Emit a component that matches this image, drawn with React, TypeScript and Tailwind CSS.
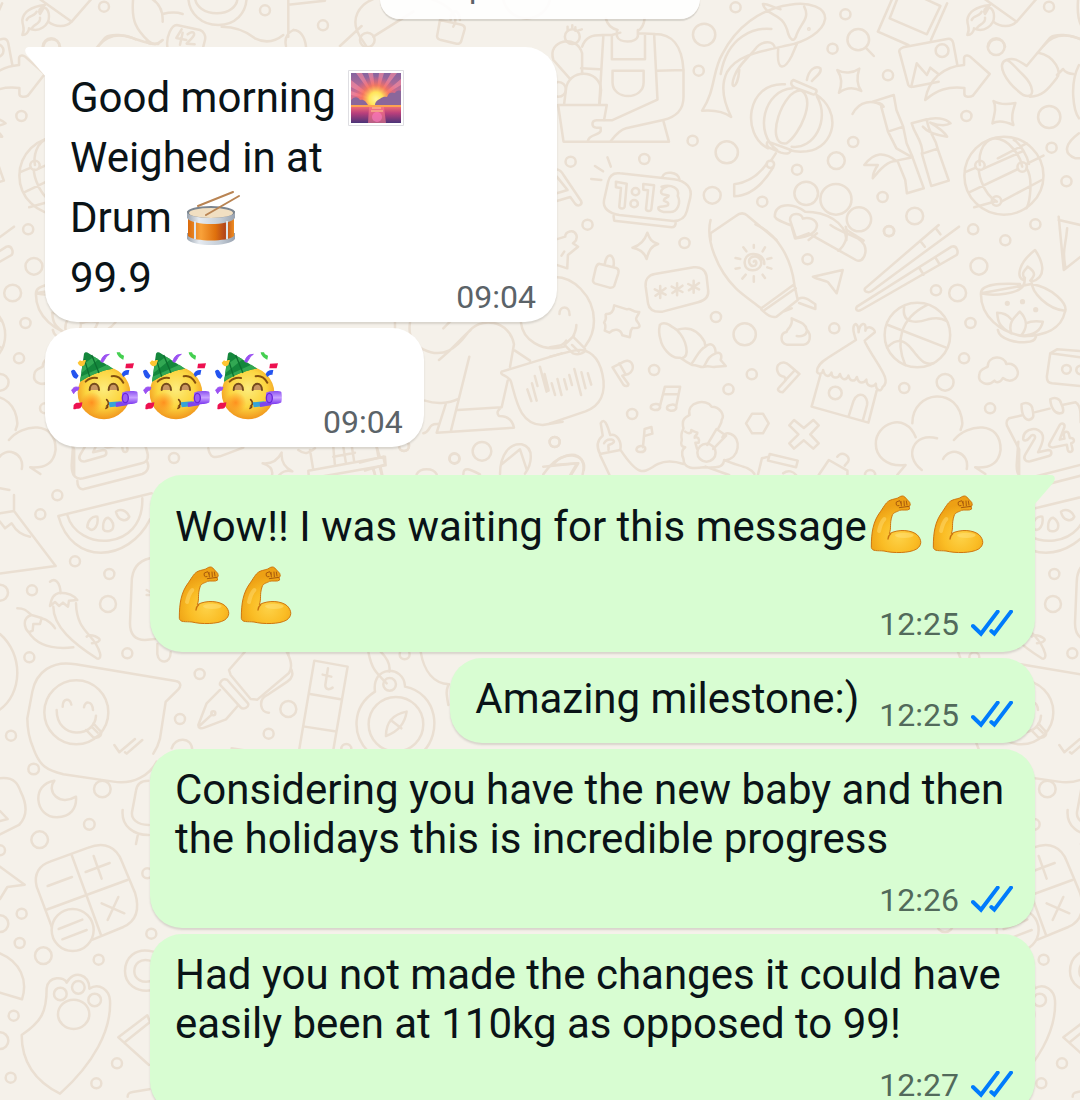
import React from 'react';

type Dot = [number, number, number];

const Dots = ({ items }: { items: Dot[] }) => (
  <>
    {items.map(([cx, cy, r]) => (
      <circle key={`${cx}-${cy}`} cx={cx} cy={cy} r={r} />
    ))}
  </>
);

// One horizontal tile of the wallpaper, it repeats every 945 units
const DoodleTile = () => (
  <g id="doodles">
    {/* top left strip */}
    <g transform="scale(.3333)">
      <path d="M135 15c-40 5-65 20-68 45 0 20 10 25 0 45 10 0 20-8 20-20 30 15 60-10 60-35 0-15-5-25-15-28l-12 20c-5-8-3-18 15-27M80 60c5-15 25-10 30-25M95 88c0-15 30-15 25-35" />
      <path d="M95-20l120 85M280-10l-65 75c-20 20-50 15-70 0" />
      <path d="M400-10c-5 50 0 80 20 105 15 20 30 35 45 38M445-10c30 15 45 40 43 75M488 42c20-5 45-5 60 0M488 120c-15 15-35 15-50 5" />
      <path d="M565-10c0 50 40 85 90 85s85-35 85-85M585-10c0 30 30 50 65 50s65-20 62-50" />
      <path d="M530 75l70 15c12 4 18 18 15 30l-5 20M530 75c-15 0-32 35-28 65M295 138c20-25 45-35 80-30 40 8 60 25 100 24M665 80c40 0 70 10 100 35 30 15 60 10 85-10" />
      <path d="M545 88l-16 26 30 6M548 98l-8 36M563 103c20-15 25 0 12 12l-15 16 24 2" />
      <path d="M865-5v115M865 14l110-12M880 90c20 0 35 20 38 50M880 90c-20 10-27 25-22 48M1140-10c-70 20-90 70-60 120l20 30M1120 110l120-75M1020 138l65-60M1270-10c80 20 110 60 90 90M130 140c5-30 45-30 50 0" />
      <circle cx="1102" cy="120" r="22" />
      <path d="M1320 60l65 14c8 2 10 8 9 14l-10 35c-2 6-8 10-14 8l-50-12c-7-2-10-8-8-14zM1352 60c0-35 25-35 28 0M1510 0a72 72 0 0 0 140 0" />
      <Dots items={[[312, 20, 15], [795, 31, 15], [969, 76, 15]]} />
    </g>

    {/* florist, fish, lantern, bamboo, globe */}
    <g transform="translate(550 0) scale(.338 .3333)">
      <path d="M165 55c5 20 15 30 35 35M280 55c-2 20-8 30-20 38M198 90v18c5 22 58 22 62 0V90M183 105v73h98v-75M183 105l25-7M260 100l50 2M95 140c10-30 30-35 60-35h30M158 105l-12 205M308 102l10 197-135 62h-45c-18 2-15 22 0 22h12v10c-5 14-35 10-38 30M310 102c50 0 80 30 85 108l-77 2M395 210v80c0 40-20 60-60 70l-110 25c-20 5-35 25-45 38M92 205l54 3M185 212h92v35c0 55-92 55-92 0z" />
      <path d="M24 315h144l-8 45M24 315l16 110h312l-16-60M42 310l5-40c5-65 100-65 104 0l-4 40M58 235L10 180c-20-60 70-80 85-20v60" />
      <circle cx="66" cy="110" r="22" />
      <path d="M52 88v-8M66 84V76M82 92l12-4M75 92V82" />
      <path d="M450 332c40-60 30-120 60-170 40-80 110-135 200-148 60-10 105 10 104 42-5 40-60 70-110 80-90 20-150 30-180 80-20 40-10 90 12 135-20-15-50-22-86-19M630 12c10 40 60 20 75 90 5 15 15 25 22 10 10-40 45-55 25-92M630 12c15-2 25 10 52 16M655 87c-50-5-130 20-150 135M665 145c0-25-40-25-60 5-30 35-50 50-60 80-15 40 10 40 15-20M675 148c-5 70 20 60 40 20l15-35" />
      <circle cx="766" cy="87" r="2" />
      <circle cx="912" cy="119" r="32" />
      <path d="M934 143l24 25" />
      <path d="M850 210c20 12 45 10 65-4-8 25-8 48 6 67-22-12-45-10-66 5 10-25 8-48-5-68zM1312 303c20 12 45 10 65 6-8 25-14 45-6 66-22-10-45-15-62-5 5-25 13-48 3-67z" />
      <path d="M645 445c-80-40-65-200 50-192M785 282c80 50 60 160-25 172-20 2-40 0-50-3M672 450c-70-50-40-180 45-185M790 290c40 70-10 160-75 150M700 430c-70 10-10-170 45-158 40 30-5 130-45 158zM720 240l65 28c8 5 0 20-10 14l-52-20c-12-6-12-18-3-22zM645 425l68 25c-4 14-15 12-30 8l-35-15c-8-5-8-15-3-18M760 240c5-30 25-45 40-35 5 15-15 25-25 38M668 460l-14 22M660 503c-30 50-70 85-115 86v-36c40-5 70-25 95-60" />
      <circle cx="652" cy="493" r="11" />
      <path d="M970 95L1015-10M970 95l90 40M1175 10l-48 110M1030-10l-25 65 110 48L1155 18l-75-35M1035 160c-5-10 2-15 10-18l130-25c10-2 16 5 18 12l12 65M1035 160l25 95c3 6 8 7 15 5l75-15M1070 255l15-65 30 35 10-22 25 20" />
      <circle cx="1160" cy="152" r="19" />
      <path d="M1110 300c10-60 50-100 115-105v-20c0-8 10-12 18-5l58 52-50 65c-8 5-25 5-25-5v-18c-50-5-80 5-116 36z" />
      <path d="M1350 180c-30 10-5 65 50 105 40 15 30-30 0-60s-40-45-50-45zM1350 180c25-10 40 5 60 18l70-85c15-12 60-10 90 5M1445 158c50 10 70 60 55 75-30 40-45 55-80 57M1500 225l18-18c5 10 20 15 30 15M1565 195c-30 60-15 140 0 160M1565 400c-40 30-50 60-10 75h15" />
      <path d="M895 342c20-40 60-45 92-22-5-10-20-15-32-15M955 305l62-20 8 45 20 50-45 15-20-75M1000 395l25 50 48 28 33 92-50 15-5-40-22-55M1025 482l48-10M1045 380l10 50 18 42M930 495c30-40 60-40 95-12-25 0-45 20-70 52 0-15 5-25 15-40zM1070 370l45-12c5 45 25 50 32 88l-45 15c0-40-20-50-32-91zM1100 460l28 98 52-16-33-95M1110 360c30-10 60-5 75 10-15 10-40 5-60-2 20 12 40 25 50 42-40-5-60-15-72-30" />
      <circle cx="1343" cy="527" r="117" />
      <path d="M1313 415c-40 10-45 60-41 80M1284 505l112-50M1232 515l28-12M1313 415c50 0 80 60 84 85M1272 510c-10-10 5 70 50 95M1240 577l145-70M1410 492l50-25M1335 605l120-65M1255 622l65-18M1410 430l-85 45M1410 505c20 30 10 100 0 120M1372 420c20 10 40 50 45 72" />
      <circle cx="1272" cy="496" r="14" /><circle cx="1397" cy="501" r="14" /><circle cx="1321" cy="603" r="14" />
      <path d="M160 600l12-55c4-18 15-28 35-25l160 18c35 5 55 25 48 55l-10 40c-5 20-20 30-40 30l-160-18c-30-5-50-20-45-45zM188 648l2 14 170 20c10 0 12-8 12-16M333 530c5-18 45-15 50 8M170 472l10 28M133 498l24 16M122 537l30 3" />
      <path d="M195 545l32 6-6 68c0 10-16 8-16 0l5-55-15-2zM276 552l32 4-8 70c0 10-16 8-16 0l6-55-14-2zM330 560c30-8 55 5 48 28 10 20 0 50-25 48-20 2-35-5-32-14 8-5 20 0 28-6 5-10-8-10-12-14 0-10 14-8 14-15-8-5-18 0-22-8-2-8 5-15 17-19z" />
      <circle cx="253" cy="575" r="11" /><circle cx="249" cy="611" r="11" />
      <path d="M-10 520c20-20 40-15 50 5l52 78c5 12-10 18-18 8l-14-20-60 18M20 530l32 40-32 10" />
      <circle cx="758" cy="580" r="35" /><circle cx="846" cy="598" r="46" /><circle cx="914" cy="658" r="36" />
      <path d="M665 650c0-40 50-45 90-15 60 0 120 30 122 85M665 650c5 10 20 15 45 25M728 715l-18-55c0-25 35-22 38-4 15-5 40 0 42 20-2 25-30 35-62 39zM790 700l-25 20M878 690l50 32" />
      <path d="M475 720v-20l75-52c12-10 25-10 35 0l85 72" />
      <Dots items={[[549, 22, 15], [874, 43, 15], [836, 146, 15], [456, 104, 33], [440, 212, 15], [1000, 226, 15], [422, 422, 15], [897, 426, 15], [523, 457, 33], [61, 485, 15], [279, 477, 15], [847, 482, 25], [731, 509, 15], [480, 586, 25], [628, 605, 15], [984, 591, 15], [1079, 648, 25], [1003, 693, 15], [1232, 348, 15], [1320, 140, 25], [1477, 351, 33], [1484, 443, 15], [1528, 544, 15], [1436, 673, 15], [1252, 688, 15], [111, 674, 15], [25, 268, 22]]} />
    </g>

    {/* sunscreen, chopsticks, diya, hut, flowers */}
    <g transform="translate(550 230) scale(.338 .3333)">
      <path d="M-20 40l65-20c0-15 25-25 33-5 5 15-5 20-10 25l15 10-30 25-2 40L-10 95M42 65l-8 12" />
      <path d="M148 102l48 12c8 3 8 8 6 16l-12 38c-3 6-8 6-14 5l-42-12c-6-2-8-8-6-14l8-35c3-8 6-12 12-10zM162 104c3-40 32-35 26 6" />
      <path d="M288 8c6 18 12 28 32 34-20 5-28 20-34 45-6-18-18-30-42-34 22-6 36-20 44-45z" />
      <path d="M310 132l115-20c20-3 35 8 38 25l5 45c2 20-10 30-30 35l-105 28c-25 2-40-5-43-25l-7-50c-2-20 8-35 27-38zM326 168v36M310 178l32 16M312 197l30-22M376 160v36M360 170l32 16M362 189l30-22M425 152v36M409 162l32 16M411 181l30-22" />
      <path d="M475-30c-15 60 20 150 75 205 20 20 50 40 75 60l98-72c-10-80-50-150-115-180M625 238c20 20 30 25 45 22l63-50-10-45M635 240l92-65M738 205c10-5 18 0 25 3l22 15v14l-48-18M690 245l25-10" />
      <path d="M603 95c5-8 12 5 3 12-15 5-22-15-12-24 20-12 35 8 30 22-8 22-45 22-48-5-1-15 8-28 25-28 20 0 33 12 33 30M603 45v8M636 52l-7 12M655 84l-12 3M655 116l-12-4M636 144l-7-10M603 155v-16M569 146l10-12M549 116l12-2M549 84l14 3M572 52l9 12" />
      <path d="M778 140l88-20-18 70-26-34c-10-5-30-7-44-16zM715-10l10 35 40-15M765 10l140 80c20 10 35-20 25-45-15-30-60-30-100-60M875-10c10 30-5 60-22 72" />
      <path d="M1150-15L932 175c-5 10 10 15 20 8L1210-10M1095 32l14 18M1143-3l12 16M908 230l280-180c15-5 22 15 15 25L920 240c-10 5-18 0-12-10zM1093 114l12 20M1140 82l12 20" />
      <path d="M190 226l38 12c12-5 15 10 36 8-5 15-15 18-5 30 12 15 5 20-15 18-8 8-5 15-8 28l-22-6c-5-20-25-22-38-8l-14-6c5-18 0-20-2-24 12-18 0-22 6-26 15 2 22-8 24-26z" />
      <path d="M325 285c15-15 35 5 50 15 30-10 60-5 82 35l3 15c15-15 30-5 30 20 15-5 20 5 15 20l15 18-30 2c-10 5-20-5-30 0-15 5-20-5-40-5-20-10-25-15-35-22-30 5-55-35-58-55-5-15-5-30-2-43zM375 300c30 30 40 80 15 85M460 350c-20 10-25 30-40 50M490 370c-25 10-25 25-35 40" />
      <path d="M715 265c15 10 40 10 45 35 15 15 10 42-10 44h-50c-20-5-20-35 0-38 0-10 20-15 15-41zM730 318c15 3 28-2 30-15" />
      <path d="M905 330l-85 55c-20 12-30 25-30 40 5 12 18 5 18-5 5 22 18 22 25 8 0 18 20 20 25 4 5 20 20 20 25 5 5 20 20 18 25 4 5 22 20 20 28 8 0 20 18 25 28 12 0 20 15 28 20 10 30-20-20-70-52-135M905 330c-10-30-10-45 0-48 8 5 8 15 8 25 3-30 25-35 20-5 5-20 30-5 28 5l-30 25M800 435l-26 95 168 48 26-102M884 558l14-45c15-35 45-15 40 12l-12 45" />
      <circle cx="844" cy="489" r="19" />
      <circle cx="1087" cy="315" r="97" />
      <path d="M1048 230c-10 60 50 45 70 38 20-5 40-5 55 5M1116 225c-80 40-95 110-65 180M1000 285l172 68M1000 350c40-40 65 0 80 20 20 25 30 35 55 30" />
      <path d="M1275 190c0-30 60-30 115-28M1425 162c60 10 110 60 98 85-10 50-60 70-120 72-70-10-130-60-128-129zM1275 190c40 10 110 0 125-22 5-10 5-15 5-25M1425 148c-5 40 50 90 98 94M1400 150c-20-10-15-50 35-90 20 30 40 80-10 95M1403 145c-10-20 5-25 10-35 30 20 18 30 8 42M1325 300c5 30 60 40 85 36 15 0 25-5 28-16M1365 310c-40-20-40-40-42-62 15 0 30 5 40 18M1365 310c-10-30 5-45 25-65 20 20 25 45 5 70M1408 280c15-8 30-8 50-5-5 25-25 40-60 42" />
      <Dots items={[[1353, 220, 4], [1398, 215, 4], [1437, 239, 4]]} />
      <path d="M1505-40l15 160 50-40M1505-30l65 15M1530-5c-5 60-15 60-5 120" />
      <path d="M185 412l35-18c25-10 35 25 12 38l-18 5 18 25c0 8-10 8-15 2zM205 400l17 30M738 432l-50 55c-10 0-18-8-10-15l20-22-5-10c-20 0-25-25-18-35 10-12 25-8 32 0zM725 420l-30 32" />
      <path d="M325 530l15-60h45l-12 60M337 493h40M312 522c20-2 18 20-3 18-15-2-15-16 3-18zM360 524c20-2 18 20-3 18-15-2-15-16 3-18zM275 652l5-55 20-6 3 20-20 6M268 648c20-2 18 20-3 18-15-2-10-16 3-18z" />
      <path d="M0 380l70-18c45-10 75 20 85 70 12 55-5 95-50 112L0 580M5 460l10 35M22 447l12 48M42 448l8 30M57 435l8 30M72 417l20 78M93 427l12 48M112 430l10 34M-45 438l8 30M-30 410l20 75M-16 432l12 50" />
      <path d="M0 142c70-10 130 60 130 130 0 30-10 55-25 75M0 352c30-5 40-5 48-20M28 252c0-25 30-28 30 3M78 285c0 15-5 25-10 35l35 35c5 12-15 22-35 15l-25-25 28-28M65 345l20 20" />
      <path d="M150 580c10-20 20 5 28 35 20-5 35 20 30 45l-60 12c-10-20-10-40 8-55zM160 640c10-20 40-10 25 0-20 10-10 0-12 20M148 675l28 60M210 662c60 90 70 60 110 40 30-15 60-5 75 0" />
      <path d="M395 595c-8-30 10-35 18-40-10-40 50-50 65-25 25 0 40 25 30 40 0 10-5 15-10 25M395 595c0 5-10 10-5 35-5 15 0 20 10 22-10 5-12 20-5 35 0 30 30 30 60 25 30 0 55 5 60-20 50-5 50-70 20-80-15-5-20 0-25 10M400 605c10 8 20 5 18-5 8 5 10 5 18 8 0 10-8 5-8 15 10-5 15 5 12 15h-10l5 18M465 645l28-48 28 20-38 40M515 690c40 20 70 15 90 42M460 710l70 25" />
      <circle cx="463" cy="668" r="27" />
      <path d="M598 551h32l17 29-17 30h-32l-18-30zM722 570l29 24 28-24 16 16-25 27 25 27-16 16-28-25-29 25-14-16 27-27-27-27zM615 735l12-50 20-5M650 672l83 20-5 20-83-20zM690 730c15-12 30-5 38 5M795 735l30-45 55 32v12M850 680c15-20 40 0 32 15l-10 12M-20 710l100-10-20 35M10 705c20-40 100-40 90 15" />
      <path d="M1082 622c-30-80-120-40-118 20 0 35 30 70 88 63l-25 30M1072 580c0-100 140-115 148 0 0 10-5 15-5 20M1195 630c40-50 140-60 138 30-5 40-30 55-75 52l30 20M1145 625c-70-20-100 55-45 95M1163 687c20-40 80-20 70 30" />
      <path d="M1270 435c0-20 20-20 25-25 0-35 50-35 55-8 30-5 45 30 25 45-15 10-25 5-35-3-8 15-20 15-25 8-20 20-50 5-45-17z" />
      <path d="M1400 555l-42 10c-10 8-8 20-3 28l33 65v77M1430 548l48-12M1515 525l40-8c15 10 15 30 15 60M1395 523c15-10 30 0 32 12 5 25 5 30-10 35-15-2-22-20-22-47zM1480 508c15-10 30 0 32 12 8 15 10 30-2 30-15 2-28-15-30-42z" />
      <path d="M1400 625c0-32 50-38 58-8 4 18-8 35-14 50l30-7c12 0 12 15 2 18l-55 16c-15 2-22-8-15-20l28-48c5-10-8-16-14-4-8 12-22 12-20 3zM1478 640l30-55c6-8 16-4 14 6l-14 38 14-3-2-12c0-10 12-12 15-2l3 12c12-2 18 12 4 16l4 18c0 10-12 10-14 2l-3-16-38 8c-12 2-17-5-13-12z" />
      <path d="M1480 370l20-12 70 5M1480 370l90 12M1480 370l-10 70c0 15 5 18 15 20l85 8" />
      <Dots items={[[398, 39, 15], [762, 88, 15], [1003, 4, 15], [1347, 31, 15], [1269, 109, 25], [1142, 181, 15], [1206, 189, 25], [1244, 279, 15], [491, 261, 15], [576, 313, 33], [841, 295, 15], [1225, 385, 15], [1169, 457, 25], [308, 420, 15], [597, 433, 15], [528, 478, 15], [1048, 474, 15], [243, 552, 15], [1302, 535, 15], [14, 636, 15], [1528, 418, 13], [1570, 420, 13], [947, 735, 15]]} />
    </g>

    {/* between the incoming bubbles and the first reply */}
    <g transform="translate(360 280) scale(.3333)">
      <path d="M150 128c-5 30 0 60 40 80 60 30 100-5 130-45 40-60 130-40 142 30l-12 68M237 240c50-40 60-60 95-90M328 230l-55 222M195 362c30 10 70 10 100-5M293 390l132-8 18-80M230 458l232-15c-5-25-20-35-45-35-8-10-5-15 8-28M230 458l27-85M190 460c25-5 10-30 45-28M425 275l180-55M425 275c-8 10 22 12 28 30 15 50 25 130 95 130l60-10M465 212l45 30M483 128c5 50 60 90 130 72M250 145l20-20M105 145v-20M502 328l12 35M516 310l14 52" />
      <path d="M420 583c0-60 30-95 65-90 40 10 30 60 10 88M425 553l55-45 20 60M550 583c40-60 110-80 120-30 3 10 0 20-2 30M580 555l75-5-20 32M310 583c0-25 20-15 50 0M170 583c10-20 50-20 60 0M0 548l70-18 5 24-60 18M55 530l-5-28M40 570l5 14M60 564l5 20M-30 450l15 30" />
      <Dots items={[[366, 514, 28], [284, 536, 15], [584, 486, 15], [132, 498, 15]]} />
    </g>
    <g transform="translate(0 440) scale(.3333)">
      <path d="M625 25c5 30 20 28 35 24l70-26M845 38c-10 20-25 35-57 32 25 8 32 20 28 36M845 38c-2 25 10 45 32 56-20-5-30 2-40 12M925 92l230-42 2 26-230 40zM930 30l10 60M1000 20l5 58M1030 20l8 50M1055 15l8 52M1130 20l10 32M1000 50l65-12M1120 85l5 18M1142 82l5 22M895 30c20 15 30 10 50-5" />
      <path d="M220 5l-5 70c0 30 10 45 35 40l175-45c20-5 22-20 15-40l-10-30M232 122c0 15 5 28 20 25l175-45c15-5 22-20 15-36" />
      {/* shirt and melon */}
      <path d="M42 165v48l125 165L-10 402M42 213L0 220M90 290c-25-5-40-15-55-40l-20 15-15-20M0 145l28 5" />
      <path d="M175 228l280-68M175 228c40 150 210 140 275 10M202 225c30 110 230 110 225-50M262 262c0-20 15-35 30-32 5 25-10 45-22 38zM310 268c-3-20 5-35 14-35 20 12 20 35 5 40-8 2-15 2-19-5zM348 215c10-8 30-8 40 15-10 20-35 10-40-15z" />
      {/* chillies */}
      <path d="M150 425c15-12 30 0 32 35M150 498c5-25 10-35 30-40 25 0 40 5 52 22l-25 2-3 18-15-12-12 10-12-12zM160 500c0 60 60 110 130 155 12 5 12-10 10-15-15-60-70-60-72-150M52 505c25 0 30 10 42 20-30 10-20 40-8 52l12-5 2-20h20l5-18-28-8M85 575c30 50 90 52 135 47M125 535c20 5 35 20 40 30M260 590c10-12 45 5 38 12-5 8-10 5-22 8" />
      {/* ice lolly */}
      <path d="M450 355c-35 8-55 30-55 75l-5 120c0 35 15 50 45 50l30-3M472 612v30c5 32 40 30 40-5M440 450l10 6M440 465h10" />
      <path d="M0 582c70 60 70 180-5 230" />
      {/* smiley speech bubble */}
      <path d="M82 835l15-80c12-60 60-95 130-82l300 50c15 2 18 15 8 25l-38 38-17 110c-5 20-10 30-20 45M82 835c0 35 5 60 18 90 20 55 40 65 90 78l150 22c60 10 110-20 130-60" />
      <circle cx="229" cy="817" r="96" />
      <path d="M188 800c0-25 22-28 26-6M252 802c2-20 25-20 27 8M170 810c0 90 115 85 118 17M258 870l22 22c20 5 30-10 18-22l-18-20M275 860l18 18M343 915l15 22 47-40M375 937l5 4 47-41" />
      {/* fountain pen */}
      <path d="M735 635l-48 55 5 15 60 72 20 2 95-80c10-15 8-35-5-60l-5-10M660 730c5-12 12-15 22-10l62 70c5 12-15 20-22 12l-62-68zM660 750l-40 40-25 65c0 10 8 12 18 8l65-25 35-40M598 858l38-35M872 685c10 15 5 30-10 40l-60 40c-30 15-20 55 5 53" />
      <circle cx="640" cy="820" r="6" />
      <path d="M943 662l100 18-43 250M943 662l-45 265M930 762l92 16M914 860l90 14M984 685l-8 50c0 15 12 15 22 8M968 704l26 6" />
      <circle cx="1169" cy="733" r="19" /><circle cx="1188" cy="853" r="82" />
      <path d="M1125 755c-10-80 85-80 90-18M1125 755c-70 45-70 130-20 180M1215 740c100 20 110 140 55 195M1105 635c10 50 20 60 55 95M1142 635c20 20 30 40 26 60M1158 888c0-40 20-65 62-73-5 35-25 60-62 73zM1172 840l32 25M1262 635c10 60 40 95 85 98M1345 735c-8 20-5 30 0 60M695 925l90 15M515 925c10-35 60-35 62 5M865 635v10" />
      <Dots items={[[522, 54, 15], [1212, 18, 15], [1363, 55, 15], [172, 166, 15], [121, 223, 15], [225, 364, 15], [328, 402, 15], [324, 492, 24], [96, 451, 15], [0, 458, 24], [88, 652, 15], [382, 640, 15], [599, 702, 15], [1214, 643, 15], [865, 807, 24], [540, 837, 15], [806, 881, 15], [33, 887, 15], [1039, 927, 15]]} />
    </g>

    {/* moon, calculator, paw */}
    <g transform="translate(0 740) scale(.3333)">
      <path d="M163 122c-70 10-60 110 8 110 40-2 60-25 57-62-50 30-90-15-65-48zM0 115c45-5 55 20 62 40 15 30 25 70-5 100L0 283M0 213l23 24-23 6M0 380l74 54-52 7-22 36M0 640c60 25 85 80 66 138L0 758" />
      <path d="M110 440c-10-40 10-65 40-75l115-42c50-20 85 0 100 40l40 95c15 50 5 85-35 103l-92 38M110 440l45 120M215 345l88 240M137 510l245-90M143 438l73-27M257 396l72-27M281 348l24 68M305 490l68 30M355 471l-32 69M176 567l71-28M187 598l73-28" />
      <circle cx="218" cy="570" r="63" />
      <path d="M445 122c-25 0-35 15-37 30l-12 65c-2 20 15 38 50 38M368 210c-5 50 35 75 78 75M413 287l-5 25M460 635c-55-15-85 20-85 58 0 40 35 65 80 58M450 662c-30-8-47 10-47 32 0 25 25 35 47 30M447 975l-92-83 87-66 8 20-75 60M383 1070c0-10 5-12 15-14l50-8" />
      <path d="M65 885c60-40 75-70 75-140 5-40 55-35 60-17 20-40 70-25 68 18 30-20 60 5 62 35 5 90-50 190-150 280-80-40-115-100-115-176z" />
      <ellipse cx="221" cy="823" rx="47" ry="44" />
      <Dots items={[[181, 762, 19], [235, 742, 19], [284, 780, 19], [101, 87, 16], [307, 147, 25], [268, 253, 16], [119, 299, 25], [0, 331, 15], [442, 400, 15], [65, 521, 15], [0, 551, 25], [59, 609, 15], [130, 647, 25], [454, 581, 15], [296, 659, 15], [41, 827, 15], [0, 902, 25], [351, 970, 15], [32, 1013, 15], [289, 1030, 15]]} />
    </g>
  </g>
);

const Wallpaper = () => (
  <svg
    className="absolute top-0 left-0 -z-10"
    width="1890"
    height="1100"
    fill="none"
    stroke="#eadfd2"
    strokeWidth="7.5"
    strokeLinecap="round"
    strokeLinejoin="round"
    aria-hidden="true"
  >
    <DoodleTile />
    <use href="#doodles" x="-945" />
    <use href="#doodles" x="945" />
  </svg>
);

const Sunrise = () => (
  <svg className="ml-0.5 inline-block align-middle -mt-1.5" width="56" height="56" viewBox="0 0 56 56" role="img" aria-label="Sunrise">
    <defs>
      <linearGradient id="sky" x1="0" y1="0" x2="0" y2="1">
        <stop offset="0" stopColor="#85649f" />
        <stop offset=".5" stopColor="#d9708f" />
        <stop offset=".68" stopColor="#ff9a6a" />
      </linearGradient>
      <linearGradient id="sea" x1="0" y1="0" x2="0" y2="1">
        <stop offset="0" stopColor="#fb7a72" />
        <stop offset=".45" stopColor="#b93f7c" />
        <stop offset="1" stopColor="#4b3478" />
      </linearGradient>
      <radialGradient id="sun">
        <stop offset="0" stopColor="#fff79a" />
        <stop offset=".3" stopColor="#ffe45a" />
        <stop offset=".6" stopColor="#ff7a50" stopOpacity=".75" />
        <stop offset="1" stopColor="#ff5a70" stopOpacity="0" />
      </radialGradient>
    </defs>
    <path d="M.5.5h55v55H.5z" fill="#fff" stroke="#dedee2" />
    <path d="M3 3h50v50H3z" fill="url(#sky)" />
    <path d="M28 30L3 10v7zM28 30L8 3h6zM28 30L20 3h5zM28 30L31 3h5zM28 30L43 3h6zM28 30L53 9v6zM28 30l25-9v5zM28 30L3 21v4z" fill="#ff8ea0" opacity=".6" />
    <circle cx="28" cy="29" r="23" fill="url(#sun)" />
    <path d="M3 30c4-4 7-3 9 0 4-1 6 2 8 5H3zM53 21c-3-1-5 0-6 2-6-2-7 2-8 4-5-1-6 2-9 3-2 1-3 3-3 5h26z" fill="#8a679b" />
    <path d="M3 35h50v18H3z" fill="url(#sea)" />
    <path d="M3 36h50" stroke="#ffb347" strokeWidth="1.5" />
    <path d="M21 37h15l2 16H20z" fill="#ff7d8d" opacity=".6" />
    <path d="M24 38h9M23 41h12" stroke="#ffd08a" />
    <circle cx="29" cy="47" r="5" fill="#ff7cc4" opacity=".6" />
  </svg>
);

const Drum = () => (
  <svg className="ml-0.5 inline-block align-middle -mt-1" width="56" height="56" viewBox="0 0 56 56" role="img" aria-label="Drum">
    <defs>
      <linearGradient id="shell">
        <stop offset="0" stopColor="#d9690b" />
        <stop offset=".28" stopColor="#f9a23a" />
        <stop offset=".6" stopColor="#df700d" />
        <stop offset=".8" stopColor="#b3461c" />
        <stop offset="1" stopColor="#ef8d20" />
      </linearGradient>
      <linearGradient id="rim">
        <stop offset="0" stopColor="#9aa4b0" />
        <stop offset=".25" stopColor="#e6ebf1" />
        <stop offset=".7" stopColor="#c3ccd6" />
        <stop offset="1" stopColor="#98a2b0" />
      </linearGradient>
    </defs>
    <path d="M3 42v6c6 8 42 8 48 0v-6z" fill="url(#rim)" />
    <path d="M4 26v19c6 6 40 6 46 0V26z" fill="url(#shell)" />
    <path d="M3 20v7c6 8 42 8 48 0v-7z" fill="url(#rim)" />
    <ellipse cx="27" cy="21" rx="24" ry="6" fill="#7c858f" />
    <ellipse cx="27" cy="22" rx="22" ry="5" fill="#f1dfc2" />
    <path d="M11 30v18M43 30v18" stroke="#dfe5ec" strokeWidth="2" />
    <path d="M14 15L49 1M22 24L55 5" stroke="#b98453" strokeWidth="2" strokeLinecap="round" />
  </svg>
);

const PartyFace = () => (
  <svg className="shrink-0" width="72" height="70" viewBox="0 0 216 210" role="img" aria-label="Partying face">
    <defs>
      <radialGradient id="face" cx=".5" cy=".42" r=".58">
        <stop offset="0" stopColor="#fcec7c" />
        <stop offset=".6" stopColor="#fcd540" />
        <stop offset="1" stopColor="#f1961d" />
      </radialGradient>
      <radialGradient id="cheek">
        <stop offset="0" stopColor="#ff8419" stopOpacity=".85" />
        <stop offset="1" stopColor="#ff8419" stopOpacity="0" />
      </radialGradient>
      <linearGradient id="horn" x1="0" y1="0" x2="0" y2="1">
        <stop offset="0" stopColor="#8a4ff0" />
        <stop offset=".5" stopColor="#c9a2ff" />
        <stop offset="1" stopColor="#7b35ef" />
      </linearGradient>
    </defs>
    <circle cx="99" cy="126" r="79" fill="url(#face)" />
    <circle cx="62" cy="155" r="32" fill="url(#cheek)" />
    <path d="M27 92L39 8c4-6 9-5 14-1l73 46c-35 5-70 20-99 39z" fill="#14873c" />
    <path d="M34 42L69 17l14 8-52 42zM29 77l80-36 17 12c-35 5-70 20-99 39z" fill="#32a853" />
    <path d="M62 12l22 54M40 25l16 52" stroke="#0d6f30" strokeWidth="4" />
    <path d="M44 92c10-10 22-13 34-11M122 76c14-3 27 5 35 19" stroke="#84500f" strokeWidth="6" fill="none" strokeLinecap="round" />
    <path d="M56 117c0-25 28-25 28 0M113 117c0-25 28-25 28 0" fill="#c89562" stroke="#754a1c" strokeWidth="6" strokeLinecap="round" />
    <path d="M107 146c8 8 6 15 1 19 4 2 2 5-3 7" stroke="#7a4312" strokeWidth="5" fill="none" strokeLinecap="round" />
    <path d="M113 154l35-3 2 14-34 4z" fill="#35a3d8" />
    <path d="M134 155l35-7v15l-34 5z" fill="#7d46ed" />
    <path d="M153 126c0-6 42-9 46-3 2 10 2 20 0 31-5 6-42 8-46 3z" fill="url(#horn)" />
    <ellipse cx="163" cy="141" rx="9" ry="14" fill="#9b5df5" stroke="#6a26dc" strokeWidth="4" />
    <path d="M103 12l12-2c-10 4-12 15-20 24l-6-3c4-8 5-14 14-19zM2 118c8-14 16-9 22-9l-3 8c-8 2-10 7-13 11z" fill="#9b51f2" stroke="#9b51f2" strokeWidth="3" />
    <path d="M137 4h10c3 10 10 7 12 11l-2 11c-8-2-19-12-20-22z" fill="#44cf50" />
    <path d="M20 35l7-7c8 5 10-3 18 0l-5 14c-8 7-16 3-20-7z" fill="#ffc533" />
    <path d="M165 38l24-1-4 15h-22zM8 162c8-12 14-4 26-8-1 12-3 20-14 19-6 0-8 4-13 1z" fill="#ed1150" />
    <path d="M0 60c14-10 12 4 23 14l-6 9C6 82 2 72 0 60zM152 70c4-12 12-14 23-13l-3 15c-8-2-10 4-15 6z" fill="#2454ef" />
  </svg>
);

const Biceps = () => (
  <svg className="inline-block align-middle -mt-2.5" width="62" height="60" viewBox="0 0 186 180" role="img" aria-label="Flexed biceps">
    <defs>
      <radialGradient id="muscle" gradientUnits="userSpaceOnUse" cx="95" cy="125" r="95">
        <stop offset="0" stopColor="#fdd248" />
        <stop offset=".55" stopColor="#fabd25" />
        <stop offset="1" stopColor="#eda014" />
      </radialGradient>
    </defs>
    <path
      d="M13 157c0-45 5-78 28-108 12-18 17-28 28-33 10-5 20-3 32-12 8-3 12 1 15 5l12 13c2 7 3 10-2 12l2 8c-6 6-22 1-31 4-6 5-19 5-22 17-8 25-1 32-8 53 28-15 68-11 84 4 14 15 14 31-2 42-21 13-70 13-98 6-19-2-36 2-38-11z"
      fill="url(#muscle)"
      stroke="#cf760e"
      strokeWidth="3"
    />
    <path d="M71 116c-5 4-8 10-8 16" stroke="#c8710d" strokeWidth="4" fill="none" strokeLinecap="round" />
    <path d="M96 32c-7 2-10-2-8-11l10-4 4 8M103 33l-1-14M112 32l-1-14M120 30l-2-12M97 38l29-4" stroke="#a85a0c" strokeWidth="3" fill="none" strokeLinecap="round" />
    <path d="M36 108c4-18 8-28 16-36" stroke="#ffe07a" strokeWidth="12" fill="none" strokeLinecap="round" opacity=".45" />
    <ellipse cx="112" cy="121" rx="28" ry="8" fill="#ffe27a" opacity=".5" />
  </svg>
);

const ReadTicks = () => (
  <svg width="42" height="28" viewBox="0 5 126 84" fill="none" stroke="#007bfc" strokeWidth="12" strokeLinecap="round" strokeLinejoin="miter" role="img" aria-label="Read">
    <path d="M6 53l24 23L80 10M61 68l9 8 50-66" />
  </svg>
);

const Stamp = ({ time, sent = false, className = '' }: { time: string; sent?: boolean; className?: string }) => (
  <div className={`flex h-[38px] shrink-0 items-center gap-3 text-[32px] leading-[38px] ${sent ? 'text-[#526a5b]' : 'text-[#5b6368]'} ${className}`}>
    <time>{time}</time>
    {sent && <ReadTicks />}
  </div>
);

const SENT = 'relative mr-[45px] rounded-[32px] bg-[#d8fdd2] pl-[25px] pr-[22px] pt-4 pb-[9px] shadow-[0_2px_2px_rgba(70,60,50,0.16)]';
const RECEIVED = 'relative ml-[45px] flex w-fit items-end rounded-[32px] bg-white pl-[25px] pr-[21px] pb-1.5 shadow-[0_2px_2px_rgba(70,60,50,0.16)]';

export default function App() {
  return (
    <main className="relative isolate flex h-screen flex-col overflow-hidden bg-[#f5f1ea] font-[Roboto,sans-serif] text-[42px] leading-[49px] text-[#0a1317]">
      <Wallpaper />

      {/* Date chip, scrolled almost out of view */}
      <div className="-mt-10 h-[59px] w-[320px] shrink-0 self-center rounded-[20px] bg-white/90 pl-[89px] pt-2 text-[32px] leading-[38px] text-[#5b6368] shadow-[0_2px_1px_rgba(70,60,50,0.16)]">
        p
      </div>

      <section className="mt-7 flex flex-col gap-1.5">
        <div className={`${RECEIVED} gap-[52px] rounded-tl-none pt-[21px]`}>
          <svg className="absolute -left-5 top-0" width="21" height="30" viewBox="0 0 21 30" aria-hidden="true">
            <path d="M21 0H4C0 0-1 4 2 8l19 22z" fill="#fff" />
          </svg>
          <p className="pb-2 leading-[60px]">
            <span className="block h-[60px]">Good morning <Sunrise /></span>
            <span className="block h-[60px]">Weighed in at</span>
            <span className="block h-[60px]">Drum <Drum /></span>
            <span className="block h-[60px]">99.9</span>
          </p>
          <Stamp time="09:04" />
        </div>

        <div className={`${RECEIVED} gap-9 pt-[23px]`}>
          <div className="flex pb-5 pl-px">
            <PartyFace />
            <PartyFace />
            <PartyFace />
          </div>
          <Stamp time="09:04" />
        </div>
      </section>

      <section className="mt-7 flex flex-col gap-1.5">
        <div className={`${SENT} ml-[150px] rounded-tr-none`}>
          <svg className="absolute -right-5 top-0" width="21" height="30" viewBox="0 0 21 30" aria-hidden="true">
            <path d="M0 0h17c4 0 5 4 2 8L0 30z" fill="#d8fdd2" />
          </svg>
          <p className="leading-[71px]">
            <span className="block h-[71px] whitespace-nowrap">Wow!! I was waiting for this message<Biceps /><Biceps /></span>
            <span className="block h-[71px]"><Biceps /><Biceps /></span>
          </p>
          <Stamp time="12:25" sent className="-mt-7 justify-end" />
        </div>

        <div className={`${SENT} flex w-fit items-end gap-5 self-end`}>
          <p className="pb-[11px]">Amazing milestone:)</p>
          <Stamp time="12:25" sent />
        </div>

        <div className={`${SENT} ml-[150px]`}>
          <p>Considering you have the new baby and then the holidays this is incredible progress</p>
          <Stamp time="12:26" sent className="mt-[18px] justify-end" />
        </div>

        <div className={`${SENT} ml-[150px]`}>
          <p>Had you not made the changes it could have easily been at 110kg as opposed to 99!</p>
          <Stamp time="12:27" sent className="mt-[18px] justify-end" />
        </div>
      </section>
    </main>
  );
}
